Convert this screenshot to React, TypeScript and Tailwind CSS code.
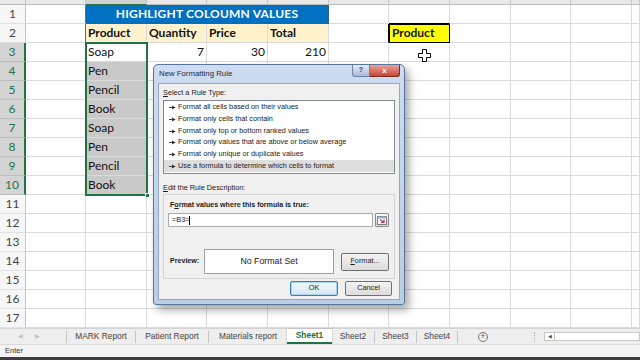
import React from 'react';
import clsx from 'clsx';

// column widths: row header, A..J, partial K
const COLS = [
  'w-[26px]',
  'w-[60px]',
  'w-[61px]',
  'w-[60px]',
  'w-[61px]',
  'w-[61px]',
  'w-[60px]',
  'w-[61px]',
  'w-[61px]',
  'w-[60px]',
  'w-[61px]',
  'w-[8px]',
];

const ITEMS = ['Pen', 'Pencil', 'Book', 'Soap', 'Pen', 'Pencil', 'Book'];

const RULES = [
  'Format all cells based on their values',
  'Format only cells that contain',
  'Format only top or bottom ranked values',
  'Format only values that are above or below average',
  'Format only unique or duplicate values',
  'Use a formula to determine which cells to format',
];

function Cell({
  w,
  className,
  children,
}: {
  w: string;
  className?: string;
  children?: React.ReactNode;
}) {
  return (
    <div
      className={clsx(
        'shrink-0 h-full border-r border-b border-[#dadada] flex items-center overflow-hidden whitespace-nowrap',
        w,
        className
      )}
    >
      {children}
    </div>
  );
}

function SheetRow({ n }: { n: number }) {
  const selected = n >= 3 && n <= 10;
  const inTable = n >= 2 && n <= 10;
  const dark = 'border-[#6b6b6b]';

  let tableCells: React.ReactNode;
  if (n === 1) {
    tableCells = (
      <div className="shrink-0 w-[243px] h-full bg-[#0070c0] border-r border-b border-[#3a5f86] flex items-center justify-center text-white font-bold text-[12px] tracking-[0.2px]">
        HIGHLIGHT COLOUMN VALUES
      </div>
    );
  } else if (n === 2) {
    tableCells = ['Product', 'Quantity', 'Price', 'Total'].map((t, i) => (
      <Cell key={t} w={COLS[2 + i]} className={clsx(dark, 'bg-[#fff2cc] font-bold pl-[2px]')}>
        {t}
      </Cell>
    ));
  } else if (n === 3) {
    tableCells = (
      <>
        <Cell w={COLS[2]} className={clsx(dark, 'bg-white pl-[2px]')}>
          Soap
        </Cell>
        <Cell w={COLS[3]} className={clsx(dark, 'justify-end pr-[2px]')}>
          7
        </Cell>
        <Cell w={COLS[4]} className={clsx(dark, 'justify-end pr-[2px]')}>
          30
        </Cell>
        <Cell w={COLS[5]} className={clsx(dark, 'justify-end pr-[2px]')}>
          210
        </Cell>
      </>
    );
  } else if (inTable) {
    tableCells = (
      <>
        <Cell w={COLS[2]} className={clsx(dark, 'bg-[#c9c9c9] pl-[2px]')}>
          {ITEMS[n - 4]}
        </Cell>
        <Cell w={COLS[3]} className={dark} />
        <Cell w={COLS[4]} className={dark} />
        <Cell w={COLS[5]} className={dark} />
      </>
    );
  } else {
    tableCells = [2, 3, 4, 5].map((c) => <Cell key={c} w={COLS[c]} />);
  }

  return (
    <div className="flex h-[19px]">
      <Cell
        w={COLS[0]}
        className={clsx(
          'justify-center text-[12px]',
          selected
            ? 'bg-[#d4d4d4] text-[#217346] border-r-2 border-r-[#217346] border-b-[#bdbdbd]'
            : 'bg-[#f7f7f7] text-[#444] border-r-[#c6c6c6] border-b-[#e2e2e2]'
        )}
      >
        {n}
      </Cell>
      <Cell w={COLS[1]} className={n <= 10 ? 'border-r-[#6b6b6b]' : undefined} />
      {tableCells}
      <Cell w={COLS[6]} className={n === 2 ? 'border-r-black' : undefined} />
      {n === 2 ? (
        <Cell
          w={COLS[7]}
          className="bg-[#ffff00] border-black font-bold pl-[3px] shadow-[inset_1px_1px_0_#000]"
        >
          Product
        </Cell>
      ) : (
        <Cell w={COLS[7]} className={n === 1 ? 'border-b-black' : undefined} />
      )}
      {[8, 9, 10, 11].map((c) => (
        <Cell key={c} w={COLS[c]} />
      ))}
    </div>
  );
}

function RuleArrow() {
  return (
    <svg width="7" height="5" viewBox="0 0 7 5" className="shrink-0">
      <path d="M0 2.5h3.5" stroke="#333" strokeWidth="0.9" />
      <path d="M3 0.4L6.6 2.5L3 4.6z" fill="#333" />
    </svg>
  );
}

function Dialog() {
  return (
    <div className="absolute left-[153px] top-[64px] w-[252px] h-[241px] rounded-t-[5px] rounded-b-[3px] border border-[#56749c] bg-gradient-to-b from-[#cddcf0] to-[#b9cde7] shadow-[4px_5px_9px_rgba(0,0,0,0.35)] flex flex-col font-['Liberation_Sans',Arial,sans-serif] text-[#1b1b1b]">
      {/* title bar */}
      <div className="h-[18px] flex items-start justify-between pl-[5px] pr-[4px]">
        <span className="mt-[4px] text-[7.8px] leading-[10px] text-[#1e2a3a]">
          New Formatting Rule
        </span>
        <div className="flex">
          <div className="w-[18px] h-[12px] rounded-bl-[3px] border border-t-0 border-[#6a83a8] bg-gradient-to-b from-[#e3ebf6] to-[#a7bad4] flex items-center justify-center text-[7px] font-bold text-[#2b3f5c]">
            ?
          </div>
          <div className="w-[30px] h-[12px] rounded-br-[3px] border border-t-0 border-l-0 border-[#7a2b22] bg-gradient-to-b from-[#e9a397] to-[#c4463a] flex items-center justify-center text-[8px] font-bold text-white leading-none">
            x
          </div>
        </div>
      </div>

      {/* body */}
      <div className="flex-1 mx-[4px] mb-[4px] bg-[#f0f0f0] border border-[#93a8c6] flex flex-col px-[4px] pt-[3px] text-[7.3px]">
        <div className="leading-[12px]">
          <u>S</u>elect a Rule Type:
        </div>
        <div className="mt-[1px] h-[74px] border border-[#828790] bg-white py-[1px] flex flex-col">
          {RULES.map((r, i) => (
            <div
              key={r}
              className={clsx(
                'h-[12px] flex items-center gap-[2px] pl-[5px] whitespace-nowrap',
                i === RULES.length - 1 && 'bg-[#dedede]'
              )}
            >
              <RuleArrow />
              <span>{r}</span>
            </div>
          ))}
        </div>

        <div className="mt-[8px] leading-[12px]">
          <u>E</u>dit the Rule Description:
        </div>
        <div className="h-[85px] border border-[#d3d3d3] flex flex-col px-[4px] pt-[4px]">
          <div className="leading-[12px] font-bold ml-[2px] text-[7.1px]">
            F<u>o</u>rmat values where this formula is true:
          </div>
          <div className="mt-[2px] h-[14px] flex gap-[2px]">
            <div className="w-[205px] h-full border border-[#abadb3] bg-white flex items-center pl-[3px]">
              <span>=B3=</span>
              <span className="w-px h-[9px] bg-black" />
            </div>
            <div className="w-[14px] h-full border border-[#8d8d8d] rounded-[1px] bg-gradient-to-b from-[#f6f6f6] to-[#d8d8d8] flex items-center justify-center">
              <svg width="10" height="9" viewBox="0 0 10 9">
                <rect x="0.5" y="0.5" width="9" height="8" fill="#fff" stroke="#7d7d7d" />
                <rect x="0.5" y="0.5" width="9" height="2" fill="#8fb0d9" />
                <path d="M3 3.5l4 3M7 3.5v3h-3" stroke="#d0304a" strokeWidth="1.2" fill="none" />
              </svg>
            </div>
          </div>
          <div className="mt-[22px] h-[25px] flex items-center">
            <div className="w-[36px] pl-[2px] font-bold text-[7.1px]">Preview:</div>
            <div className="w-[130px] h-full border border-[#a0a0a0] bg-white flex items-center justify-center text-[8.8px] text-[#222]">
              No Format Set
            </div>
            <div className="ml-[7px] w-[48px] h-[18px] border border-[#707070] rounded-[2px] bg-gradient-to-b from-[#f3f3f3] to-[#dcdcdc] flex items-center justify-center">
              <span>
                <u>F</u>ormat...
              </span>
            </div>
          </div>
        </div>

        <div className="mt-[2px] h-[15px] flex justify-end gap-[7px] pr-[3px]">
          <div className="w-[48px] h-full border border-[#3c7fb1] rounded-[2px] bg-gradient-to-b from-[#f2f8fc] to-[#d7e6f1] shadow-[inset_0_0_0_1px_#a8d4f2] flex items-center justify-center">
            OK
          </div>
          <div className="w-[47px] h-full border border-[#707070] rounded-[2px] bg-gradient-to-b from-[#f3f3f3] to-[#dcdcdc] flex items-center justify-center">
            Cancel
          </div>
        </div>
      </div>
    </div>
  );
}

function Sep({ dotted }: { dotted?: boolean }) {
  return dotted ? (
    <div className="shrink-0 w-px h-[10px] border-l border-dotted border-[#b0b0b0]" />
  ) : (
    <div className="shrink-0 w-px h-[12px] bg-[#c6c6c6]" />
  );
}

function Tab({ w, label }: { w: string; label: string }) {
  return (
    <div className={clsx('shrink-0 h-full flex items-center justify-center text-[#444]', w)}>
      {label}
    </div>
  );
}

function TabBar() {
  return (
    <div className="h-[16px] flex items-center bg-[#eeeeee] border-t border-[#d4d4d4] font-['Liberation_Sans',Arial,sans-serif] text-[8.4px]">
      <div className="shrink-0 w-[66px] h-full flex items-center text-[6px] text-[#c2c2c2]">
        <span className="ml-[18px]">◀</span>
        <span className="ml-[12px]">▶</span>
      </div>
      <Sep />
      <Tab w="w-[68px]" label="MARK Report" />
      <Sep />
      <Tab w="w-[72px]" label="Patient Report" />
      <Sep />
      <Tab w="w-[78px]" label="Materials report" />
      <div className="shrink-0 w-[45px] h-full bg-white border-b-2 border-[#217346] shadow-[0_0_2px_rgba(0,0,0,0.25)] flex items-center justify-center font-bold text-[#217346]">
        Sheet1
      </div>
      <Tab w="w-[42px]" label="Sheet2" />
      <Sep />
      <Tab w="w-[41px]" label="Sheet3" />
      <Sep />
      <Tab w="w-[40px]" label="Sheet4" />
      <Sep />
      <div className="shrink-0 ml-[20px] w-[10px] h-[10px] rounded-full border border-[#777] flex items-center justify-center text-[#666] text-[9px] leading-none">
        +
      </div>
      <div className="shrink-0 w-[46px]" />
      <Sep dotted />
      <div className="shrink-0 ml-[9px] flex-1 h-[9px] flex">
        <div className="w-[11px] h-full border border-[#c6c6c6] bg-white flex items-center justify-center text-[5px] text-[#555]">
          ◀
        </div>
        <div className="flex-1 h-full border border-l-0 border-[#c6c6c6] bg-white" />
      </div>
    </div>
  );
}

export default function App() {
  return (
    <div className="w-[640px] h-[360px] overflow-hidden bg-white flex flex-col select-none">
      {/* sheet grid */}
      <div className="relative h-[328px] font-['Lato',sans-serif] text-[12px] text-[#111]">
        {/* column header strip */}
        <div className="flex h-[5px]">
          {COLS.map((w, i) => (
            <div
              key={i}
              className={clsx(
                'shrink-0 h-full border-r border-b border-[#c6c6c6]',
                w,
                i === 2 ? 'bg-[#d2d2d2] border-b-[#217346]' : 'bg-[#e9e9e9] border-b-[#bdbdbd]'
              )}
            />
          ))}
        </div>
        {Array.from({ length: 17 }, (_, i) => (
          <SheetRow key={i} n={i + 1} />
        ))}

        {/* selection outline B3:B10 */}
        <div className="absolute left-[85px] top-[42px] w-[63px] h-[154px] border-2 border-[#217346] pointer-events-none" />
        <div className="absolute left-[145px] top-[193px] w-[5px] h-[5px] bg-[#217346] border border-white" />

        {/* mouse cursor */}
        <svg className="absolute left-[418px] top-[49px]" width="13" height="13" viewBox="0 0 13 13">
          <path
            d="M4.5 0.5h4v4h4v4h-4v4h-4v-4h-4v-4h4z"
            fill="#fff"
            stroke="#000"
            strokeWidth="1"
          />
        </svg>

        <Dialog />
      </div>

      <TabBar />

      {/* status bar */}
      <div className="h-[13px] bg-[#f3f3f3] border-t border-[#dadada] flex items-center pl-[5px] font-['Liberation_Sans',Arial,sans-serif] text-[7.5px] text-[#333]">
        Enter
      </div>
      <div className="h-[3px] bg-[#3d3d3d]" />
    </div>
  );
}
